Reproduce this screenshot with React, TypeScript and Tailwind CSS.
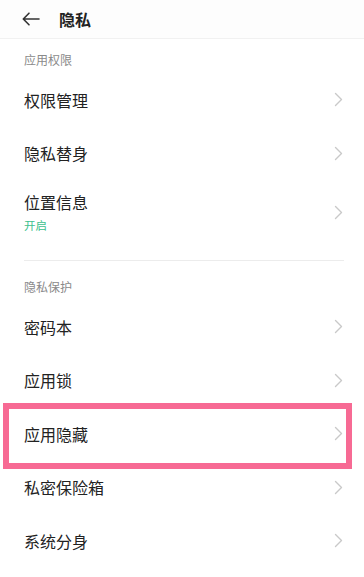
import React from "react";

const font = { fontFamily: '"Noto Sans CJK SC", "Noto Sans", sans-serif' };

function Chevron() {
  return (
    <svg width="9" height="15" viewBox="0 0 9 15" fill="none" className="shrink-0">
      <path d="M1.5 1.5 L7.5 7.5 L1.5 13.5" stroke="#c9c9c9" strokeWidth="1.4" strokeLinecap="round" strokeLinejoin="round" />
    </svg>
  );
}

function Row({ title, sub }: { title: string; sub?: string }) {
  return (
    <div className={`flex items-center justify-between pl-6 pr-[21px] ${sub ? "h-[64px]" : "h-[53.5px]"}`}>
      <div className="flex flex-col">
        <span className="text-[16px] leading-[22px] text-[#222]">{title}</span>
        {sub && <span className="mt-[3px] text-[11.5px] leading-[18px] text-[#3dbf8e]">{sub}</span>}
      </div>
      <Chevron />
    </div>
  );
}

function SectionLabel({ children }: { children: React.ReactNode }) {
  return <div className="pl-6 text-[12px] leading-[16px] text-[#8a8a8a]">{children}</div>;
}

export default function App() {
  return (
    <div className="w-[364px] h-[577px] overflow-hidden bg-white" style={font}>
      {/* Header */}
      <div className="h-[39px] flex items-center border-b border-[#f1f1f1] bg-[#fdfdfd]">
        <svg width="18" height="14" viewBox="0 0 18 14" fill="none" className="ml-[22px]">
          <path d="M17 7 H1.5 M7 1.2 L1.3 7 L7 12.8" stroke="#333" strokeWidth="1.6" strokeLinecap="round" strokeLinejoin="round" />
        </svg>
        <span className="ml-[19px] text-[16px] font-bold text-[#222] leading-none">隐私</span>
      </div>

      <div className="pt-[13px]">
        <SectionLabel>应用权限</SectionLabel>
      </div>
      <div className="pt-[5px]">
        <Row title="权限管理" />
        <Row title="隐私替身" />
        <Row title="位置信息" sub="开启" />
      </div>

      <div className="mt-[16px] mx-6 mr-[20px] h-px bg-[#ececec]" />

      <div className="pt-[18px]">
        <SectionLabel>隐私保护</SectionLabel>
      </div>
      <div className="pt-[5px]">
        <Row title="密码本" />
        <Row title="应用锁" />
        <div className="relative">
          <Row title="应用隐藏" />
          <span className="pointer-events-none absolute left-[3px] right-[12px] -top-[4px] -bottom-[8px] border-[6px] border-[#f76a94]" />
        </div>
        <Row title="私密保险箱" />
        <Row title="系统分身" />
      </div>
    </div>
  );
}
